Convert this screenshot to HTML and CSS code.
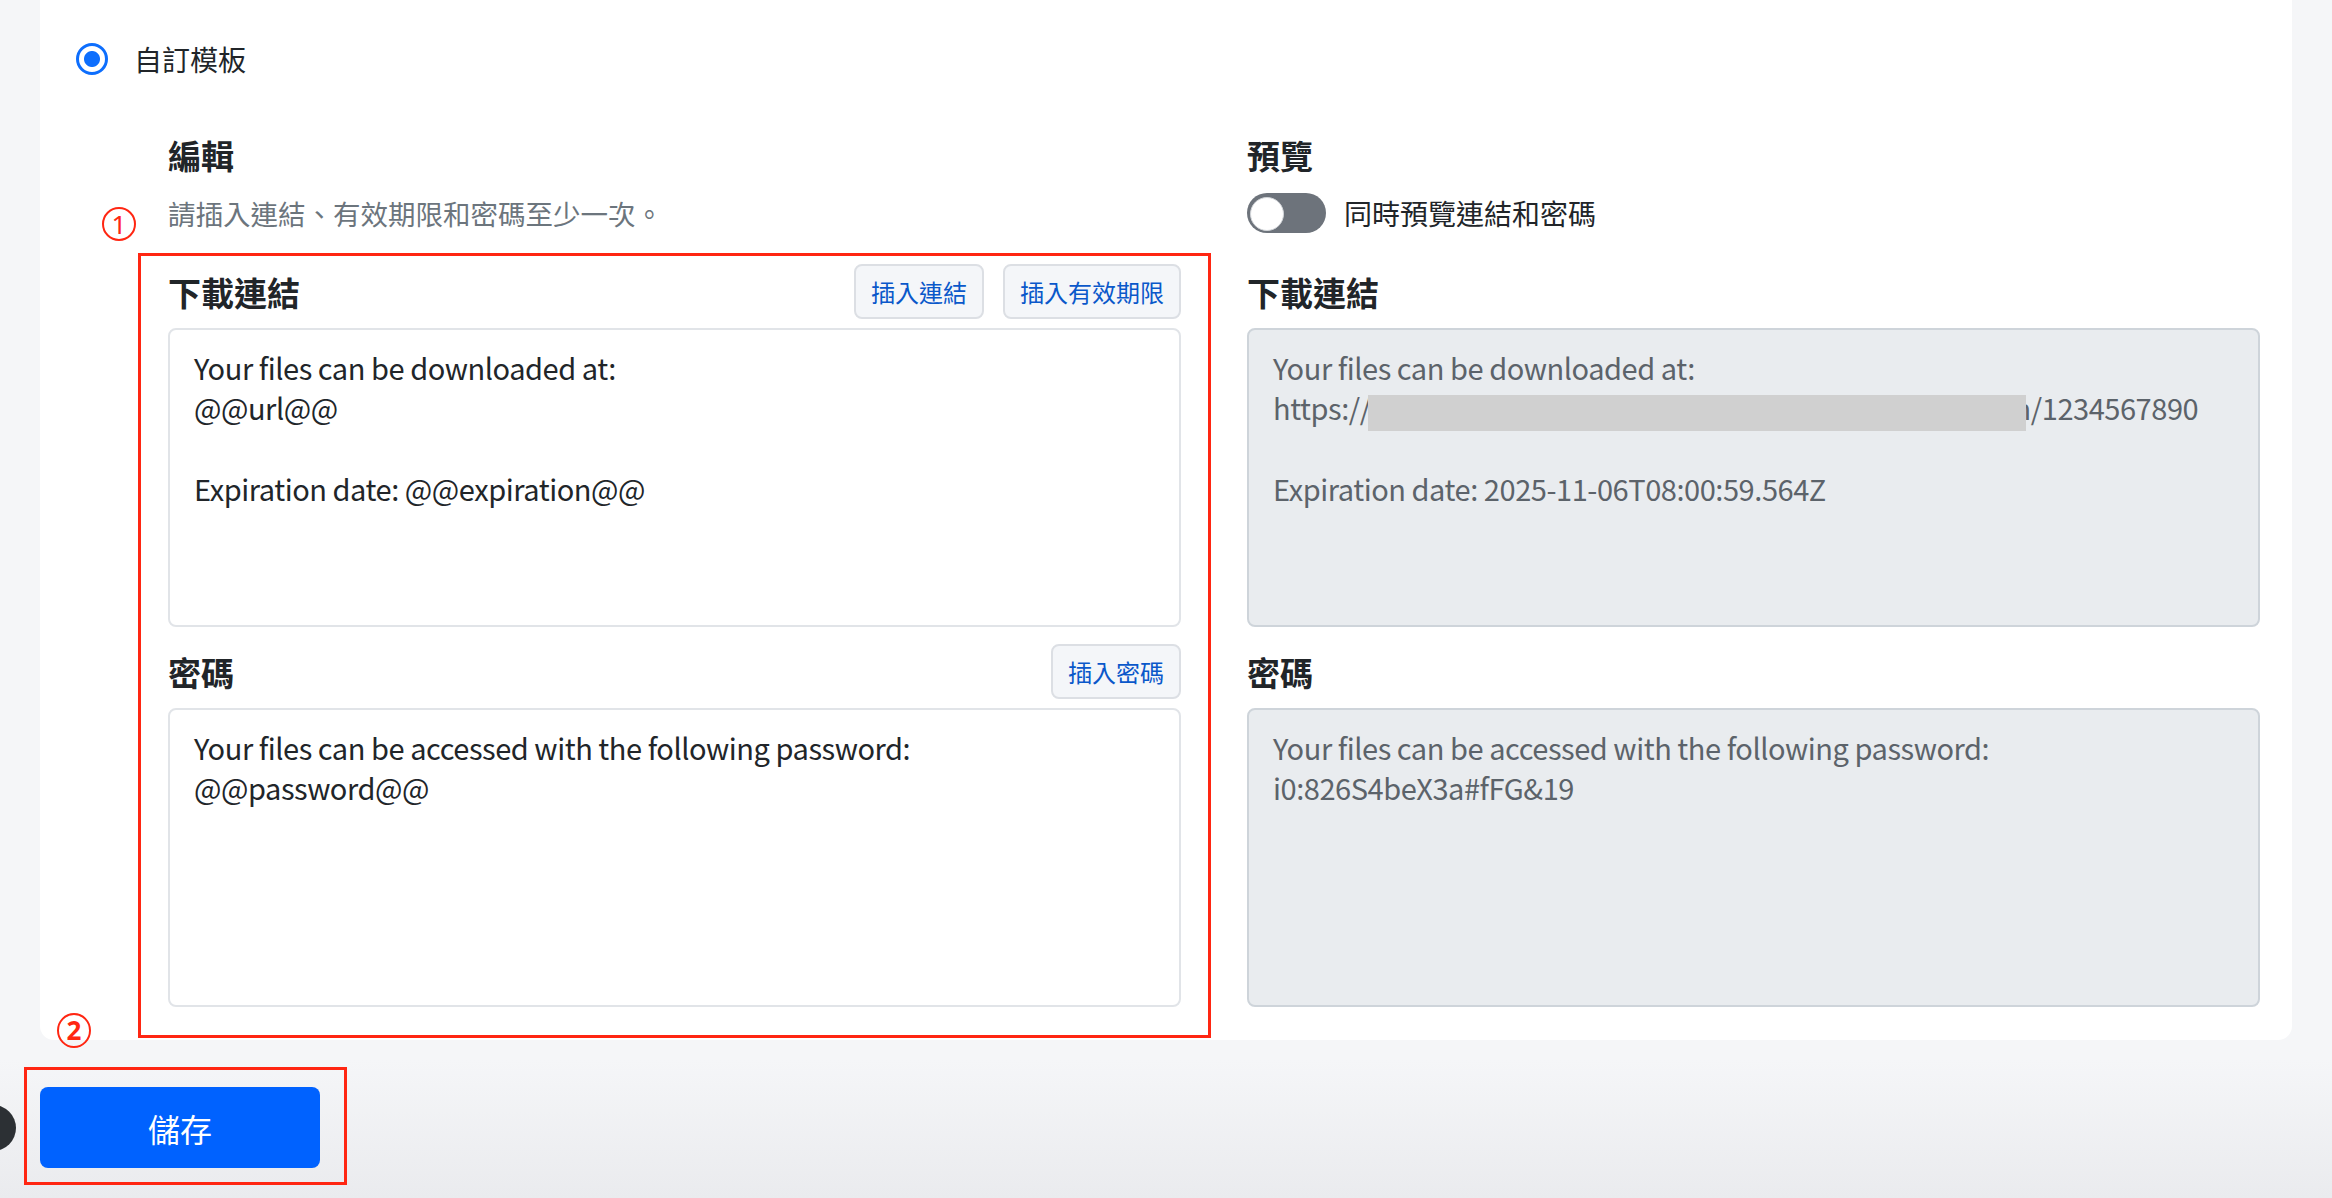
FILE: index.html
```html
<!DOCTYPE html>
<html lang="zh-Hant">
<head>
<meta charset="utf-8">
<title>自訂模板</title>
<link rel="stylesheet" href="styles.css">
</head>
<body>
<div class="page">
  <section class="card">
    <label class="option">
      <input type="radio" class="radio" name="template" checked>
      <span>自訂模板</span>
    </label>

    <div class="editor-grid">
      <div class="col">
        <h5 class="col-title">編輯</h5>
        <p class="hint">請插入連結、有效期限和密碼至少一次。</p>
        <div class="fields marked">
          <span class="mark mark-one">1</span>
          <div class="field-head">
            <h6 class="field-title">下載連結</h6>
            <div class="actions">
              <button class="btn-insert" type="button">插入連結</button>
              <button class="btn-insert" type="button">插入有效期限</button>
            </div>
          </div>
          <textarea class="field" spellcheck="false">Your files can be downloaded at:
@@url@@

Expiration date: @@expiration@@</textarea>
          <div class="field-head spaced">
            <h6 class="field-title">密碼</h6>
            <div class="actions">
              <button class="btn-insert" type="button">插入密碼</button>
            </div>
          </div>
          <textarea class="field" spellcheck="false">Your files can be accessed with the following password:
@@password@@</textarea>
        </div>
      </div>

      <div class="col">
        <h5 class="col-title">預覽</h5>
        <label class="switch-row">
          <span class="switch"></span>
          <span>同時預覽連結和密碼</span>
        </label>
        <div class="fields preview-fields">
          <div class="field-head">
            <h6 class="field-title">下載連結</h6>
          </div>
          <div class="field preview">Your files can be downloaded at:
https://<span class="redact"></span>n/1234567890

Expiration date: 2025-11-06T08:00:59.564Z</div>
          <div class="field-head spaced">
            <h6 class="field-title">密碼</h6>
          </div>
          <div class="field preview">Your files can be accessed with the following password:
i0:826S4beX3a#fFG&amp;19</div>
        </div>
      </div>
    </div>
  </section>

  <span class="mark mark-two">2</span>

  <div class="footer">
    <div class="save-frame">
      <button class="save" type="button">儲存</button>
    </div>
  </div>

  <span class="help-fab"></span>
</div>
</body>
</html>
```

FILE: styles.css
```css
* {
  box-sizing: border-box;
}

body {
  margin: 0;
  width: 2332px;
  height: 1198px;
  overflow: hidden;
  background: linear-gradient(#f5f6f8 0, #f5f6f8 1060px, #eaebee 1198px);
  font-family: "Noto Sans CJK TC", "Noto Sans", sans-serif;
  color: #212529;
}

.page {
  position: relative;
  height: 1198px;
}

/* white settings card, its top is scrolled out of view */
.card {
  margin: 0 40px;
  background: #fff;
  border-radius: 0 0 14px 14px;
  padding: 39px 32px 2px 36px;
}

.option {
  display: flex;
  align-items: center;
  gap: 26px;
  height: 40px;
  font-size: 28px;
  line-height: 40px;
}

.radio {
  appearance: none;
  margin: 0;
  width: 32px;
  height: 32px;
  border: 3px solid #0d6efd;
  border-radius: 50%;
  background: radial-gradient(circle, #0d6efd 0 7.5px, #fff 8.5px);
  flex: none;
}

.editor-grid {
  display: grid;
  grid-template-columns: 1013px 1013px;
  column-gap: 66px;
  margin: 57px 0 0 92px;
}

.col {
  display: flex;
  flex-direction: column;
}

.col-title {
  margin: 0;
  font-size: 33px;
  line-height: 38px;
  font-weight: 600;
}

.hint {
  margin: 19px 0 0;
  font-size: 27.5px;
  line-height: 40px;
  color: #6c757d;
}

.switch-row {
  display: flex;
  align-items: center;
  gap: 18px;
  margin-top: 19px;
  height: 40px;
  font-size: 28px;
  line-height: 40px;
}

.switch {
  position: relative;
  flex: none;
  width: 79px;
  height: 40px;
  border-radius: 20px;
  background: #6d737b;
}

.switch::after {
  content: "";
  position: absolute;
  left: 3px;
  top: 4px;
  width: 32px;
  height: 32px;
  border-radius: 50%;
  background: #fff;
  border: 1px solid #d2d5d9;
}

.fields {
  display: flex;
  flex-direction: column;
}

.fields.marked {
  position: relative;
  margin: 20px -30px 0;
  border: 3px solid #ff2612;
  padding: 8px 27px 28px;
}

.preview-fields {
  margin-top: 31px;
}

.field-head {
  display: flex;
  align-items: center;
  justify-content: space-between;
  height: 55px;
  margin-bottom: 9px;
}

.field-head.spaced {
  margin-top: 17px;
}

.field-title {
  margin: 0;
  font-size: 33px;
  line-height: 38px;
  font-weight: 600;
}

.actions {
  display: flex;
  gap: 19px;
}

.btn-insert {
  height: 55px;
  padding: 0 15px;
  border: 2px solid #dcdfe4;
  border-radius: 8px;
  background: #f4f6f9;
  color: #0a58ca;
  font-family: inherit;
  font-size: 24px;
  line-height: 1;
}

.field {
  display: block;
  width: 100%;
  height: 299px;
  margin: 0;
  border: 2px solid #e1e4e8;
  border-radius: 8px;
  padding: 17px 24px;
  background: #fff;
  color: #212529;
  font-family: inherit;
  font-size: 29px;
  letter-spacing: -0.45px;
  line-height: 40.3px;
  resize: none;
  outline: none;
  overflow: hidden;
  white-space: pre-wrap;
}

.field.preview {
  background: #e9ecef;
  border-color: #ced4da;
  color: #5c636a;
}

/* hidden part of the share address */
.redact {
  position: relative;
  z-index: 1;
  display: inline-block;
  width: 658px;
  height: 36px;
  margin: 0 -12px -10px -3px;
  vertical-align: -1px;
  background: #d0d0d0;
}

/* numbered callouts */
.mark {
  position: absolute;
  display: block;
  border: 2px solid #ff2612;
  border-radius: 50%;
  color: #ff2612;
  text-align: center;
  font-family: "Noto Sans", sans-serif;
}

.mark-one {
  left: -39px;
  top: -49px;
  width: 34px;
  height: 34px;
  font-size: 26px;
  line-height: 30px;
}

.mark-two {
  left: 57px;
  top: 1013px;
  width: 34px;
  height: 35px;
  font-size: 26px;
  line-height: 30px;
  font-weight: 700;
}

.footer {
  display: flex;
  padding: 27px 0 0 24px;
}

.save-frame {
  display: flex;
  border: 3px solid #ff2612;
  padding: 17px 24px 14px 13px;
}

.save {
  width: 280px;
  height: 81px;
  border: 0;
  border-radius: 8px;
  background: #0062ff;
  color: #fff;
  font-family: inherit;
  font-size: 32px;
}

.help-fab {
  position: absolute;
  left: -30px;
  top: 1105px;
  width: 46px;
  height: 46px;
  border-radius: 50%;
  background: #2c3034;
}
```
